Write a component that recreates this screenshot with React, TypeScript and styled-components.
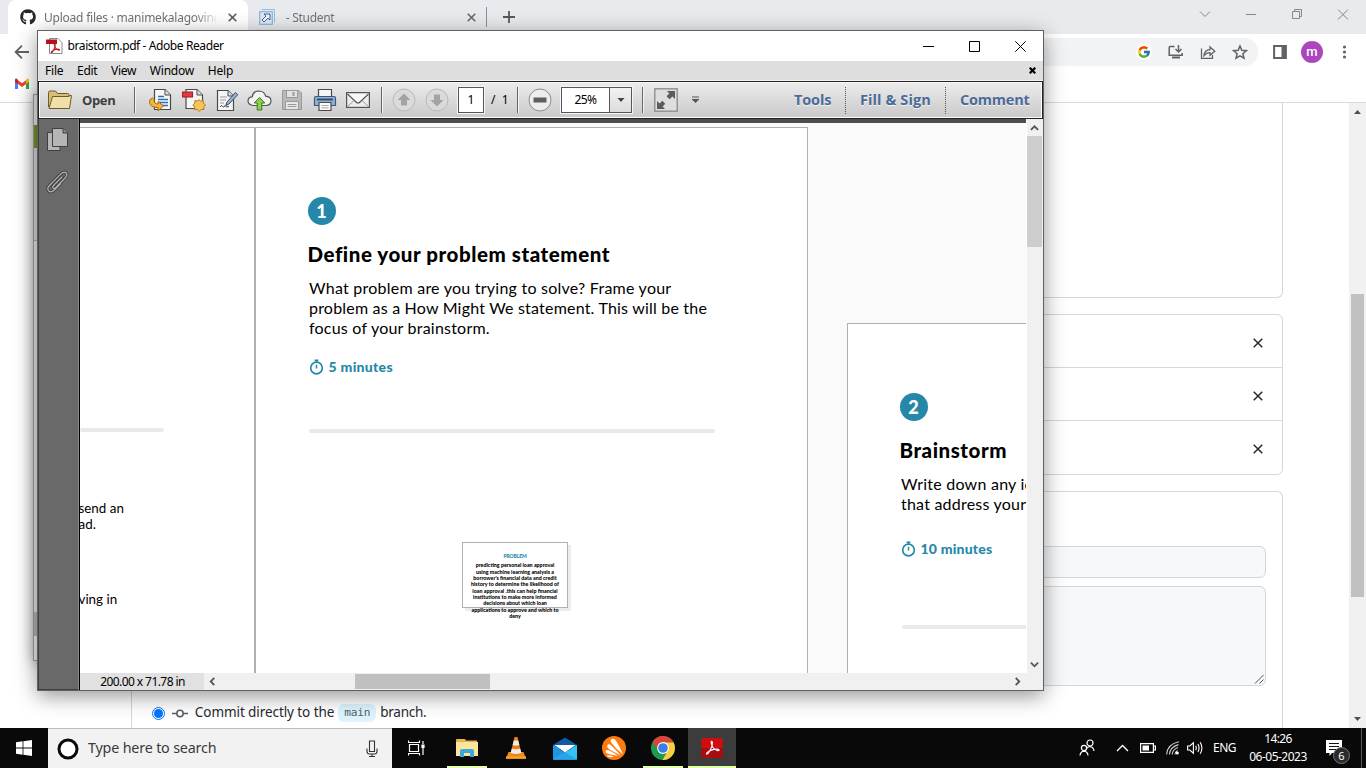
import React from 'react';
import styled, { createGlobalStyle } from 'styled-components';
import { FcGoogle } from 'react-icons/fc';
import { FaGithub } from 'react-icons/fa';

const Global = createGlobalStyle`
  * { box-sizing: border-box; }
  html, body { margin: 0; padding: 0; overflow: hidden; }
  body { font-family: "Open Sans", "Noto Sans", sans-serif; }
  svg { display: block; flex: none; }
`;

const UI = '"Noto Sans", "Open Sans", sans-serif';
const DOC = 'Lato, "Open Sans", sans-serif';

/* ---------- desktop ---------- */

const Desktop = styled.div`
  position: relative;
  width: 1366px;
  height: 768px;
  overflow: hidden;
  display: flex;
  flex-direction: column;
  background: #fff;
`;

const Label = styled.span<{ $size: number; $ls?: number; $color?: string; $weight?: number; $font?: string }>`
  font-family: ${(p) => p.$font || UI};
  font-size: ${(p) => p.$size}px;
  letter-spacing: ${(p) => p.$ls || 0}px;
  color: ${(p) => p.$color || '#000'};
  font-weight: ${(p) => p.$weight || 400};
  white-space: nowrap;
  line-height: 1;
`;

/* ---------- browser ---------- */

const Browser = styled.div`
  height: 728px;
  display: flex;
  flex-direction: column;
`;

const TabStrip = styled.div`
  height: 34px;
  background: #e8eaed;
  display: flex;
  align-items: stretch;
  padding-left: 8px;
`;

const Tab = styled.div<{ $active?: boolean; $w: number }>`
  width: ${(p) => p.$w}px;
  background: ${(p) => (p.$active ? '#fff' : 'transparent')};
  border-radius: 8px 8px 0 0;
  display: flex;
  align-items: center;
  padding: 0 ${(p) => (p.$active ? 11 : 10)}px 0 ${(p) => (p.$active ? 12 : 11)}px;
  gap: 8px;
`;

const TabTitle = styled.span<{ $ls: number }>`
  flex: 1;
  min-width: 0;
  overflow: hidden;
  white-space: nowrap;
  font-family: ${UI};
  font-size: 12px;
  letter-spacing: ${(p) => p.$ls}px;
  color: #6f7378;
  -webkit-mask-image: linear-gradient(90deg, #000 86%, transparent 99%);
  mask-image: linear-gradient(90deg, #000 86%, transparent 99%);
`;

const TabDivider = styled.div`
  width: 1px;
  height: 20px;
  margin-top: 7px;
  background: #8c9096;
`;

const NewTab = styled.div`
  display: flex;
  align-items: center;
  margin-left: 16px;
`;

const Caption = styled.div`
  margin-left: auto;
  display: flex;
  padding: 6px 15px 0 0;
  gap: 30px;
  height: 24px;
`;

const Toolbar = styled.div`
  height: 36px;
  display: flex;
  align-items: center;
  padding: 0 14px 0 14px;
  background: #fff;
`;

const Omnibox = styled.div`
  flex: 1;
  margin-left: 40px;
  height: 28px;
  border-radius: 14px;
  background: #f1f3f4;
  display: flex;
  align-items: center;
  justify-content: flex-end;
  gap: 16px;
  padding-right: 10px;
`;

const GoogleDot = styled.span`
  width: 16px;
  height: 16px;
  border-radius: 50%;
  background: #fff;
  display: flex;
  align-items: center;
  justify-content: center;
`;

const ToolbarEnd = styled.div`
  display: flex;
  align-items: center;
  margin-left: 14px;
`;

const Avatar = styled.div`
  width: 22px;
  height: 22px;
  border-radius: 50%;
  background: #ab47bc;
  color: #fff;
  margin: 0 13px;
  font: 500 13px/21px Roboto, sans-serif;
  text-align: center;
`;

const Bookmarks = styled.div`
  height: 33px;
  border-bottom: 1px solid #d8dadd;
  padding: 8px 0 0 14px;
`;

const Page = styled.div`
  flex: 1;
  min-height: 0;
  overflow: hidden;
  display: flex;
`;

const Main = styled.div`
  width: 1152px;
  margin-left: 131px;
  display: flex;
  flex-direction: column;
  gap: 16px;
`;

const Box = styled.div<{ $h: number; $edge?: 'top' | 'bottom' }>`
  flex: none;
  height: ${(p) => p.$h}px;
  border: 1px solid #d0d7de;
  ${(p) => p.$edge === 'top' && 'border-top: 0;'}
  ${(p) => p.$edge === 'bottom' && 'border-bottom: 0;'}
  border-radius: ${(p) => (p.$edge === 'top' ? '0 0 6px 6px' : p.$edge === 'bottom' ? '6px 6px 0 0' : '6px')};
`;

const FileRow = styled.div`
  height: 53px;
  border-bottom: 1px solid #d0d7de;
  display: flex;
  align-items: center;
  justify-content: flex-end;
  padding: 4px 19px 0 0;
  &:last-child {
    border-bottom: 0;
    padding-top: 3px;
  }
`;

const CommitBox = styled(Box)`
  padding: 54px 16px 0;
`;

const Field = styled.div<{ $h: number }>`
  height: ${(p) => p.$h}px;
  border: 1px solid #d0d7de;
  border-radius: 6px;
  background: #f6f8fa;
  margin-bottom: 8px;
  display: flex;
  align-items: flex-end;
  justify-content: flex-end;
`;

const RadioRow = styled.div`
  display: flex;
  align-items: center;
  height: 20px;
  margin-top: 17px;
  padding-left: 4px;
`;

const Radio = styled.span`
  width: 13px;
  height: 13px;
  border-radius: 50%;
  border: 1px solid #0075ff;
  display: flex;
  align-items: center;
  justify-content: center;
  margin-right: 7px;
  &::after {
    content: '';
    width: 9px;
    height: 9px;
    border-radius: 50%;
    background: #0075ff;
  }
`;

const Branch = styled.span`
  background: #ddf4ff;
  color: #57606a;
  border-radius: 6px;
  height: 18px;
  width: 38px;
  text-align: center;
  font: 11.2px/18px "DejaVu Sans Mono", monospace;
  letter-spacing: -0.2px;
  margin: 0 4px 0 4px;
`;

const PageScroll = styled.div`
  width: 17px;
  margin-left: auto;
  background: #f1f1f1;
  display: flex;
  flex-direction: column;
  align-items: center;
  padding: 7px 0 7px;
`;

const PageThumb = styled.div`
  width: 13px;
  height: 303px;
  margin-top: 180px;
  margin-bottom: auto;
  background: #c1c1c1;
`;

/* ---------- window behind the reader ---------- */

const BackWindow = styled.div`
  position: absolute;
  left: 33px;
  top: 94px;
  width: 500px;
  height: 567px;
  border: 1px solid #9b9b9b;
  background: #ececec;
  box-shadow: 0 2px 14px rgba(0, 0, 0, 0.38);
  display: flex;
  flex-direction: column;
`;

const Strip = styled.div<{ $h: number; $bg: string }>`
  height: ${(p) => p.$h}px;
  background: ${(p) => p.$bg};
`;

/* ---------- reader window ---------- */

const Reader = styled.div`
  position: absolute;
  left: 37px;
  top: 30px;
  width: 1007px;
  height: 661px;
  border: 1px solid #606060;
  background: #fff;
  box-shadow: 0 5px 20px rgba(0, 0, 0, 0.42);
  display: flex;
  flex-direction: column;
`;

const TitleBar = styled.div`
  height: 30px;
  display: flex;
  align-items: center;
  padding: 0 17px 0 8px;
  gap: 4.5px;
`;

const TitleButtons = styled.div`
  margin-left: auto;
  display: flex;
  gap: 35px;
`;

const MenuBar = styled.div`
  height: 20px;
  background: #dedede;
  border-bottom: 1px solid #f4f4f4;
  display: flex;
  align-items: center;
  padding: 0 7px 0 7px;
  gap: 13.7px;
`;

const MenuClose = styled.span`
  margin-left: auto;
`;

const Tools = styled.div`
  height: 38px;
  border: 1px solid #222;
  box-shadow: inset 0 0 0 1px #fbfbfb;
  background: linear-gradient(#ececec, #c9c9c9);
  display: flex;
  align-items: center;
`;

const Slot = styled.div<{ $ml: number; $w: number }>`
  flex: none;
  margin-left: ${(p) => p.$ml}px;
  width: ${(p) => p.$w}px;
  display: flex;
  align-items: center;
`;

const Sep = styled.div<{ $ml: number }>`
  flex: none;
  margin-left: ${(p) => p.$ml}px;
  width: 2px;
  height: 26px;
  background: #666;
  border-right: 1px solid #f4f4f4;
`;

const PageBox = styled.div`
  flex: none;
  margin-left: 9px;
  width: 26px;
  height: 26px;
  border: 1px solid #555;
  outline: 1px solid #f6f6f6;
  background: #fff;
  display: flex;
  align-items: center;
  justify-content: center;
`;

const Zoom = styled.div`
  flex: none;
  margin-left: 9px;
  width: 71px;
  height: 26px;
  border: 1px solid #555;
  outline: 1px solid #f6f6f6;
  background: #fff;
  display: flex;
  align-items: stretch;
`;

const ZoomValue = styled.div`
  width: 47px;
  display: flex;
  align-items: center;
  justify-content: center;
`;

const ZoomArrow = styled.div`
  flex: 1;
  border-left: 1px solid #555;
  background: linear-gradient(#f2f2f2, #dcdcdc);
  display: flex;
  align-items: center;
  justify-content: center;
`;

const Panes = styled.div`
  margin-left: auto;
  display: flex;
  align-items: center;
  padding-right: 13px;
`;

const PaneLink = styled.span<{ $ls: number; $w: number }>`
  width: ${(p) => p.$w}px;
  font: 700 14.5px/26px "Open Sans", sans-serif;
  letter-spacing: ${(p) => p.$ls}px;
  color: #4b6b98;
  text-shadow: 0 1px 0 #f4f4f4;
  white-space: nowrap;
`;

const Dots = styled.span`
  height: 27px;
  border-left: 1px dotted #555;
  margin: 0 14px;
`;

const Work = styled.div`
  flex: 1;
  min-height: 0;
  display: flex;
`;

const Rail = styled.div`
  width: 42px;
  background: #696969;
  border-left: 1px solid #404040;
  border-right: 1px solid #000;
  box-shadow: inset -1px 0 0 #8a8a8a, inset 0 -1px 0 #404040;
  padding: 9px 0 0 6px;
  display: flex;
  flex-direction: column;
  gap: 18px;
`;

const Center = styled.div`
  flex: 1;
  min-width: 0;
  display: flex;
  flex-direction: column;
`;

const Upper = styled.div`
  flex: 1;
  min-height: 0;
  display: flex;
`;

const Canvas = styled.div`
  flex: 1;
  min-width: 0;
  border-top: 4px solid #4e4e4e;
  background: #fafafa;
  overflow: hidden;
  display: flex;
  align-items: stretch;
  padding-top: 4px;
`;

const Sheet = styled.div<{ $w: number; $mt?: number; $ml?: number; $edges: string; $pad: string }>`
  flex: none;
  width: ${(p) => p.$w}px;
  margin-top: ${(p) => p.$mt || 0}px;
  margin-left: ${(p) => p.$ml || 0}px;
  background: #fff;
  border: solid #b0b0b0;
  border-width: ${(p) => p.$edges};
  padding: ${(p) => p.$pad};
  overflow: hidden;
`;

const Badge = styled.div`
  width: 28px;
  height: 28px;
  margin-left: -0.5px;
  border-radius: 50%;
  background: #2588a8;
  color: #fff;
  font: 900 18px/28px ${DOC};
  text-align: center;
`;

const Heading = styled.h2<{ $ls: number }>`
  margin: 15px 0 0 -0.5px;
  font: 900 20.5px/28px ${DOC};
  letter-spacing: ${(p) => p.$ls}px;
  color: #000;
  white-space: nowrap;
`;

const Para = styled.p`
  margin: 10px 0 0 1px;
  font: 400 16px/20px ${DOC};
  color: #000;
  white-space: nowrap;
`;

const Line = styled.span<{ $ls: number }>`
  display: block;
  letter-spacing: ${(p) => p.$ls}px;
`;

const Duration = styled.div<{ $mt: number }>`
  margin: ${(p) => p.$mt}px 0 0 1px;
  height: 20px;
  display: flex;
  align-items: center;
  gap: 4.5px;
`;

const Rule = styled.div<{ $w: number; $m: string }>`
  width: ${(p) => p.$w}px;
  height: 4px;
  margin: ${(p) => p.$m};
  border-radius: 2px;
  background: #e9e9e9;
`;

const Note = styled.div`
  width: 106px;
  height: 66px;
  margin: 109px 0 0 154px;
  border: 1px solid #b0b0b0;
  background: #fff;
  box-shadow: 3px 3px 0 #ececec;
  padding-top: 9.5px;
  text-align: center;
  font: 900 5.3px/6.35px ${DOC};
  white-space: nowrap;
  display: flex;
  flex-direction: column;
  align-items: center;
`;

const NoteTitle = styled.span`
  color: #2588a8;
  font-size: 5px;
  letter-spacing: -0.1px;
  margin-bottom: 3.5px;
`;

const LeftText = styled.p<{ $mt: number }>`
  margin: ${(p) => p.$mt}px 0 0 -1.5px;
  font: 400 13.4px/16px ${DOC};
  white-space: nowrap;
`;

const VScroll = styled.div`
  width: 17px;
  background: #f0f0f0;
  border-left: 1px solid #fff;
  display: flex;
  flex-direction: column;
  align-items: center;
  padding: 5px 1px 4px 0;
`;

const VThumb = styled.div`
  width: 15px;
  height: 111px;
  margin: 3px 0 auto;
  background: #cdcdcd;
`;

const Bottom = styled.div`
  height: 17px;
  background: #f0f0f0;
  display: flex;
  align-items: center;
`;

const Size = styled.div`
  width: 124px;
  height: 17px;
  background: #e1e1e1;
  display: flex;
  align-items: center;
  justify-content: center;
  padding-left: 1px;
`;

const HThumb = styled.div`
  width: 135px;
  height: 15px;
  margin-left: 138px;
  background: #c0c0c0;
`;

/* ---------- taskbar ---------- */

const Taskbar = styled.div`
  height: 40px;
  background: #090909;
  display: flex;
  align-items: stretch;
  position: relative;
`;

const Start = styled.div`
  width: 48px;
  display: flex;
  align-items: center;
  justify-content: center;
`;

const Search = styled.div`
  width: 344px;
  background: #f2f2f2;
  border-top: 1px solid #bdbdbd;
  display: flex;
  align-items: center;
  padding: 0 13px 0 9px;
  gap: 9px;
`;

const Mic = styled.span`
  margin-left: auto;
`;

const TaskButton = styled.div<{ $w?: number; $active?: boolean; $line?: boolean }>`
  width: ${(p) => p.$w || 49}px;
  margin-left: ${(p) => (p.$active ? 1 : 0)}px;
  display: flex;
  align-items: center;
  justify-content: center;
  position: relative;
  background: ${(p) => (p.$active ? '#3c3c3c' : 'transparent')};
  &::after {
    content: '';
    display: ${(p) => (p.$line ? 'block' : 'none')};
    position: absolute;
    bottom: 0;
    left: ${(p) => (p.$active ? 0 : 5)}px;
    right: ${(p) => (p.$active ? 0 : 4)}px;
    height: 2px;
    background: #dfffa8;
  }
`;

const Tray = styled.div`
  margin-left: auto;
  display: flex;
  align-items: center;
`;

const Clock = styled.div`
  width: 60px;
  margin: 0 0 0 11px;
  display: flex;
  flex-direction: column;
  align-items: center;
  gap: 6px;
`;

const Notice = styled.div`
  position: relative;
  margin: 0 8px 0 18px;
  width: 27px;
  height: 40px;
  padding-top: 12px;
`;

const Count = styled.span`
  position: absolute;
  left: 7px;
  top: 19px;
  width: 17px;
  height: 17px;
  border-radius: 50%;
  border: 1px solid #777;
  background: #2b2b2b;
  color: #fff;
  font: 11px/15px ${UI};
  text-align: center;
`;

const TrayEdge = styled.div`
  width: 5px;
  height: 40px;
  border-left: 1px solid #5a5a5a;
`;

/* ---------- drawings ---------- */

const Cross = ({ s, w, c }: { s: number; w: number; c: string }) => (
  <svg width={s} height={s} viewBox={`0 0 ${s} ${s}`}>
    <path d={`M.7 .7L${s - 0.7} ${s - 0.7}M${s - 0.7} .7L.7 ${s - 0.7}`} stroke={c} strokeWidth={w} />
  </svg>
);

const Chevron = ({ d, w, c = '#555', sw = 2 }: { d: 'up' | 'down' | 'left' | 'right'; w: number; c?: string; sw?: number }) => {
  const paths = { up: 'M1 6.5L5 2.5L9 6.5', down: 'M1 3L5 7L9 3', left: 'M7 1L3 5L7 9', right: 'M3 1L7 5L3 9' };
  return (
    <svg width={w} height={w} viewBox="0 0 10 10" fill="none">
      <path d={paths[d]} stroke={c} strokeWidth={sw} />
    </svg>
  );
};

const Tri = ({ up, c = '#505050', w = 7 }: { up?: boolean; c?: string; w?: number }) => (
  <svg width={w} height="4" viewBox="0 0 7 4">
    <path d={up ? 'M0 4L3.5 0L7 4Z' : 'M0 0L3.5 4L7 0Z'} fill={c} />
  </svg>
);

const Swoosh = ({ c, sw }: { c: string; sw: number }) => (
  <path
    d="M2.2 13.2C1.2 14.6 2.6 15.2 4 13C5.8 10.2 8 6 7.8 3C7.7 .8 6.2 1.2 6.6 3.2C7.2 6.4 9.6 9.6 12.4 10.6C15 11.4 15.4 9.4 12.6 9.3C9.2 9.2 5 10.6 2.2 13.2Z"
    fill="none"
    stroke={c}
    strokeWidth={sw}
  />
);

const Stopwatch = () => (
  <svg width="15" height="16" viewBox="0 0 15 16" fill="none" stroke="#2588a8">
    <circle cx="7.5" cy="9" r="5.8" strokeWidth="1.7" />
    <path d="M7.5 5.8V9.6M5.6 1.2H9.4M7.5 1.2V3.2" strokeWidth="1.5" />
  </svg>
);

const RoundButton = ({ d, strong }: { d: string; strong?: boolean }) => (
  <svg width="24" height="24" viewBox="0 0 24 24">
    <circle cx="12" cy="12" r="11" fill={strong ? '#ededed' : '#dadada'} stroke={strong ? '#8c8c8c' : '#b9b9b9'} />
    <path d={d} fill={strong ? '#5f5f5f' : '#a3a3a3'} />
  </svg>
);

const noteLines = [
  'predicting personal loan approval',
  'using machine learning analysis a',
  "borrower's financial data and credit",
  'history to determine the likelihood of',
  'loan approval .this can help financial',
  'institutions to make more informed',
  'decisions about which loan',
  'applications to approve and which to',
  'deny',
];

/* ---------- sections ---------- */

const BrowserWindow = () => (
  <Browser>
    <TabStrip>
      <Tab $active $w={240}>
        <FaGithub size={16} color="#24292f" />
        <TabTitle $ls={-0.23}>Upload files · manimekalagovinda</TabTitle>
        <Cross s={9} w={1.6} c="#55595e" />
      </Tab>
      <Tab $w={238}>
        <svg width="16" height="16" viewBox="0 0 16 16" fill="none">
          <path d="M2.5 .5H15.5V13.5" stroke="#7cc6e8" strokeWidth="1" />
          <rect x=".7" y="2.7" width="12.6" height="12.6" stroke="#8fb0d8" strokeWidth="1.2" fill="#dfe9f6" />
          <path d="M5 5H11V11L9 9.2L5 13L3 11L7 7.1Z" stroke="#3f5f9a" strokeWidth="1" fill="#f4f8fd" />
        </svg>
        <TabTitle $ls={-0.3}>&nbsp;- Student</TabTitle>
        <Cross s={9} w={1.6} c="#66696e" />
      </Tab>
      <TabDivider />
      <NewTab>
        <svg width="12" height="12" viewBox="0 0 12 12">
          <path d="M6 0V12M0 6H12" stroke="#55595e" strokeWidth="1.8" />
        </svg>
      </NewTab>
      <Caption>
        <svg width="16" height="16" viewBox="0 0 16 16" fill="none" stroke="#84878b">
          <path d="M3 5.5L8 10.5L13 5.5" />
        </svg>
        <svg width="16" height="16" viewBox="0 0 16 16" fill="none" stroke="#84878b">
          <path d="M3 8.5H13" />
        </svg>
        <svg width="16" height="16" viewBox="0 0 16 16" fill="none" stroke="#84878b">
          <path d="M3.5 5.5H10.5V12.5H3.5ZM5.5 5.5V3.5H12.5V10.5H10.5" />
        </svg>
        <svg width="16" height="16" viewBox="0 0 16 16" fill="none" stroke="#84878b">
          <path d="M3 3.5L13 13.5M13 3.5L3 13.5" />
        </svg>
      </Caption>
    </TabStrip>
    <Toolbar>
      <svg width="16" height="16" viewBox="0 0 16 16" fill="none" stroke="#5f6368" strokeWidth="1.8">
        <path d="M15 8H2M8 1.6L1.6 8L8 14.4" />
      </svg>
      <Omnibox>
        <GoogleDot>
          <FcGoogle size={14} />
        </GoogleDot>
        <svg width="16" height="16" viewBox="0 0 16 16" fill="none" stroke="#5f6368" strokeWidth="1.5">
          <path d="M6.5 2.5H2.2Q1.2 2.5 1.2 3.5V11.2H14.2V9M10.5 1V8M7.5 5L10.5 8L13.5 5" />
          <path d="M4 12.5H12V14.5H4Z" fill="#5f6368" stroke="none" />
        </svg>
        <svg width="16" height="16" viewBox="0 0 16 16" fill="none" stroke="#5f6368" strokeWidth="1.3">
          <path d="M1.5 4.5V14.3H12.5V11M4 11.5Q4.5 6 10 5.7V3L14.8 7.2L10 11.3V8.7Q6.5 8.5 4 11.5Z" />
        </svg>
        <svg width="16" height="16" viewBox="0 0 16 16" fill="none" stroke="#5f6368" strokeWidth="1.5">
          <path d="M8 2L9.8 6.3L14.4 6.7L10.9 9.7L12 14.2L8 11.8L4 14.2L5.1 9.7L1.6 6.7L6.2 6.3Z" />
        </svg>
      </Omnibox>
      <ToolbarEnd>
        <svg width="16" height="16" viewBox="0 0 16 16">
          <path d="M2.1 2.1H13.9V13.9H2.1Z" fill="none" stroke="#5f6368" strokeWidth="2" />
          <path d="M9.5 2H14V14H9.5Z" fill="#5f6368" />
        </svg>
        <Avatar>m</Avatar>
        <svg width="16" height="16" viewBox="0 0 16 16" fill="#5f6368">
          <circle cx="8.5" cy="3" r="1.6" />
          <circle cx="8.5" cy="8" r="1.6" />
          <circle cx="8.5" cy="13" r="1.6" />
        </svg>
      </ToolbarEnd>
    </Toolbar>
    <Bookmarks>
      <svg width="16" height="12" viewBox="0 0 16 12">
        <path d="M1 2V11H4V4Z" fill="#4285f4" />
        <path d="M15 2V11H12V4Z" fill="#34a853" />
        <path d="M4 2.2L8 5.2L12 2.2V6L8 9L4 6Z" fill="#ea4335" />
        <path d="M1 2Q1 .4 2.6 .6L4 2V6L1 3.8Z" fill="#c5221f" />
        <path d="M15 2Q15 .4 13.4 .6L12 2V6L15 3.8Z" fill="#fbbc04" />
      </svg>
    </Bookmarks>
    <Page>
      <Main>
        <Box $h={195} $edge="top" />
        <Box $h={161}>
          {[0, 1, 2].map((i) => (
            <FileRow key={i}>
              <Cross s={10} w={1.5} c="#24292f" />
            </FileRow>
          ))}
        </Box>
        <CommitBox $h={240} $edge="bottom">
          <Field $h={32} />
          <Field $h={100}>
            <svg width="11" height="11" viewBox="0 0 11 11">
              <path d="M1 9.5L9.5 1M5.5 9.5L9.5 5.5" stroke="#555" />
            </svg>
          </Field>
          <RadioRow>
            <Radio />
            <svg width="16" height="16" viewBox="0 0 16 16" fill="none" stroke="#57606a" strokeWidth="1.5">
              <circle cx="8" cy="8.5" r="3.2" />
              <path d="M0 8.5H4.8M11.2 8.5H16" />
            </svg>
            <Label $size={13.5} $ls={-0.08} $color="#24292f">
              &nbsp;&nbsp;Commit directly to the
            </Label>
            <Branch>main</Branch>
            <Label $size={13.5} $ls={-0.25} $color="#24292f">branch.</Label>
          </RadioRow>
        </CommitBox>
      </Main>
      <PageScroll>
        <Tri up c="#505050" />
        <PageThumb />
        <Tri c="#505050" />
      </PageScroll>
    </Page>
  </Browser>
);

const ReaderToolbar = () => (
  <Tools>
    <Slot $ml={8} $w={26}>
      <svg width="26" height="22" viewBox="0 0 26 22" stroke="#6b5a2b" strokeLinejoin="round">
        <path d="M1.5 18V3.5Q1.5 2 3 2H8.5L10.5 4.5H20.5Q22 4.5 22 6V9" fill="#d9bd72" />
        <path d="M22.3 6.5H24.5L22.5 19.5H2L5.5 7.5H22.3" fill="#f1e0a5" />
      </svg>
    </Slot>
    <Slot $ml={9} $w={52}>
      <Label $size={13} $weight={700} $color="#404040" $font='"Open Sans", sans-serif' $ls={-0.35}>Open</Label>
    </Slot>
    <Sep $ml={0} />
    <Slot $ml={12} $w={24}>
      <svg width="24" height="24" viewBox="0 0 24 24">
        <path d="M6.5 1.5H17L22.5 7V21.5H6.5Z" fill="#f6f6f6" stroke="#4a4a4a" strokeWidth="1.2" />
        <path d="M17 1.5V7H22.5" fill="#ddd" stroke="#4a4a4a" />
        <path d="M10 8.5H16M10 11.5H20M10 14.5H20M12 17.5H20" stroke="#2d6fb5" strokeWidth="1.4" />
        <path d="M4.5 10Q1 11 1.5 14.5Q2.5 19.5 10 19.5V23L15.5 18L10 13.5V16Q5.5 16 6.2 11.5Z" fill="#f3b73b" stroke="#a06a12" />
      </svg>
    </Slot>
    <Slot $ml={10} $w={24}>
      <svg width="24" height="24" viewBox="0 0 24 24">
        <path d="M4 1.5H15L20.5 7V20.5H4Z" fill="#f6f6f6" stroke="#4a4a4a" strokeWidth="1.2" />
        <path d="M15 1.5V7H20.5" fill="#ddd" stroke="#4a4a4a" />
        <rect x=".6" y="4" width="10" height="5" fill="#e33b41" stroke="#9c1a20" />
        <path d="M17 11.5L18.5 13.2L21.2 12.6L21.4 15.3L23.5 16.8L21.8 18.8L22 21.5L19.2 21.5L17.3 23.4L15.4 21.5L12.6 21.7L12.7 19L10.8 17L12.8 15.2L12.9 12.6L15.6 13Z" fill="#f5c55a" stroke="#b5791c" />
      </svg>
    </Slot>
    <Slot $ml={10} $w={24}>
      <svg width="24" height="24" viewBox="0 0 24 24">
        <path d="M1.5 2.5H12L17.5 8V22.5H1.5Z" fill="#f6f6f6" stroke="#4a4a4a" strokeWidth="1.2" />
        <path d="M12 2.5V8H17.5" fill="#ddd" stroke="#4a4a4a" />
        <path d="M4 9H11M4 12H10M4 15H8" stroke="#999" />
        <path d="M4 19Q6 16 6.5 18.5Q8 20 9 17.5Q10 20 13 18.5" stroke="#444" fill="none" />
        <path d="M19.5 4.5L21.7 6.8L13 16L9.8 17.5L11 14Z" fill="#9cb4cf" stroke="#374a63" />
      </svg>
    </Slot>
    <Slot $ml={7} $w={26}>
      <svg width="26" height="24" viewBox="0 0 26 24">
        <path d="M6.5 17.5Q1 17 1 12.8Q1.2 9 5.2 8.8Q6 3 12 3Q17.5 3.2 18.6 8.2Q24 8.6 24 13Q23.8 17.2 19 17.5Z" fill="#f3f3f3" stroke="#555" strokeWidth="1.2" />
        <path d="M12.5 9.5L17.8 15H14.8V22H10.2V15H7.2Z" fill="#8bd04c" stroke="#3f7a1b" />
      </svg>
    </Slot>
    <Slot $ml={7} $w={24}>
      <svg width="24" height="24" viewBox="0 0 24 24" stroke="#9a9a9a">
        <path d="M2.5 2.5H19L21.5 5V21.5H2.5Z" fill="#b9b9b9" />
        <path d="M6.5 2.5H17.5V9.5H6.5Z" fill="#e3e3e3" />
        <path d="M13.5 4V8" strokeWidth="2" />
        <path d="M5.5 13.5H18.5V21.5H5.5Z" fill="#e9e9e9" />
        <path d="M7.5 16.5H16.5M7.5 18.5H16.5" />
      </svg>
    </Slot>
    <Slot $ml={9} $w={24}>
      <svg width="24" height="24" viewBox="0 0 24 24">
        <path d="M5.5 9V1.5H18.5V9" fill="#f6f6f6" stroke="#4a4a4a" strokeWidth="1.2" />
        <path d="M1.5 10Q1.5 8.5 3 8.5H21Q22.5 8.5 22.5 10V17.5H1.5Z" fill="#8fb3dc" stroke="#3d5878" strokeWidth="1.2" />
        <path d="M4 11.5H20" stroke="#3d4a5a" strokeWidth="2" />
        <path d="M6 14.5H18V22.5H6Z" fill="#fafafa" stroke="#4a4a4a" strokeWidth="1.2" />
        <path d="M8.5 17.5H15.5M8.5 19.8H15.5" stroke="#aaa" />
      </svg>
    </Slot>
    <Slot $ml={8} $w={26}>
      <svg width="26" height="24" viewBox="0 0 26 24" stroke="#555" fill="none">
        <rect x="1.6" y="4.6" width="22.8" height="14.8" fill="#ededed" strokeWidth="1.2" />
        <path d="M2.5 6L11 14Q13 16 15 14L23.5 6" fill="#f8f8f8" strokeWidth="1.1" />
        <path d="M2.5 18.5L9 12.5M23.5 18.5L17 12.5" stroke="#999" />
      </svg>
    </Slot>
    <Sep $ml={10} />
    <Slot $ml={9} $w={24}>
      <RoundButton d="M12 5.5L18.5 12H15V17.5H9V12H5.5Z" />
    </Slot>
    <Slot $ml={9} $w={24}>
      <RoundButton d="M12 18.5L18.5 12H15V6.5H9V12H5.5Z" />
    </Slot>
    <PageBox>
      <Label $size={12}>1</Label>
    </PageBox>
    <Slot $ml={7} $w={18}>
      <Label $size={12}>/&nbsp; 1</Label>
    </Slot>
    <Sep $ml={8} />
    <Slot $ml={9} $w={24}>
      <RoundButton strong d="M5.5 9.5H18.5V14.5H5.5Z" />
    </Slot>
    <Zoom>
      <ZoomValue>
        <Label $size={12} $ls={-0.5}>25%</Label>
      </ZoomValue>
      <ZoomArrow>
        <Tri c="#444" w={8} />
      </ZoomArrow>
    </Zoom>
    <Sep $ml={10} />
    <Slot $ml={10} $w={24}>
      <svg width="24" height="24" viewBox="0 0 24 24">
        <rect x=".8" y=".8" width="22.4" height="22.4" fill="#dedede" stroke="#8f8f8f" strokeWidth="1.4" />
        <path d="M13 3H21V11L18.5 8.6L15.5 11.2L12.5 8.3L15.3 5.6ZM3 21V13L5.6 15.6L8.3 12.8L11.2 15.7L8.6 18.4L11 21Z" fill="#5c5c5c" />
      </svg>
    </Slot>
    <Slot $ml={13} $w={9}>
      <svg width="9" height="8" viewBox="0 0 9 8" fill="#555">
        <path d="M1 .5H8V1.5H1ZM1 3H8V4H7.5L4.5 7L1.5 4H1Z" />
      </svg>
    </Slot>
    <Panes>
      <PaneLink $w={37} $ls={-0.15}>Tools</PaneLink>
      <Dots />
      <PaneLink $w={71} $ls={0.1}>Fill &amp; Sign</PaneLink>
      <Dots />
      <PaneLink $w={69} $ls={-0.22}>Comment</PaneLink>
    </Panes>
  </Tools>
);

const ReaderWindow = () => (
  <Reader>
    <TitleBar>
      <svg width="17" height="17" viewBox="0 0 17 17">
        <path d="M3.5 .5H12L16 4.5V15.5H3.5Z" fill="#fff" stroke="#8a8a8a" />
        <rect x="0" y="1.5" width="11" height="4.5" fill="#b1121b" />
        <g transform="translate(4 5) scale(.66)">
          <Swoosh c="#c01822" sw={1.7} />
        </g>
      </svg>
      <Label $size={12} $ls={-0.4}>braistorm.pdf - Adobe Reader</Label>
      <TitleButtons>
        <svg width="11" height="11" viewBox="0 0 11 11"><path d="M0 5.5H11" stroke="#000" /></svg>
        <svg width="11" height="11" viewBox="0 0 11 11"><path d="M.5 .5H10.5V10.5H.5Z" stroke="#000" fill="none" /></svg>
        <svg width="11" height="11" viewBox="0 0 11 11"><path d="M.3 .3L10.7 10.7M10.7 .3L.3 10.7" stroke="#000" /></svg>
      </TitleButtons>
    </TitleBar>
    <MenuBar>
      <Label $size={12} $ls={-0.2}>File</Label>
      <Label $size={12} $ls={-0.3}>Edit</Label>
      <Label $size={12} $ls={-0.3}>View</Label>
      <Label $size={12} $ls={-0.2}>Window</Label>
      <Label $size={12} $ls={-0.2}>Help</Label>
      <MenuClose>
        <Cross s={7} w={2.2} c="#000" />
      </MenuClose>
    </MenuBar>
    <ReaderToolbar />
    <Work>
      <Rail>
        <svg width="24" height="24" viewBox="0 0 24 24" fill="#b5b5b5" stroke="#3f3f3f">
          <path d="M2.5 4.5H15V22.5H2.5Z" />
          <path d="M7.5 .5H18L22.5 5V18.5H7.5Z" />
          <path d="M18 .5V5H22.5" fill="#8d8d8d" />
        </svg>
        <svg width="24" height="24" viewBox="0 0 24 24" fill="none" strokeLinecap="round">
          <path d="M17 8L8.5 16.5Q7 18 8.2 19Q9.5 20 11 18.5L20.5 8.5Q23 5.5 21 3.8Q18.8 2 16 4.8L4.5 16.5Q1.5 19.8 3.8 22Q6.3 24 9.3 21L15.5 14.8" stroke="#3f3f3f" strokeWidth="3" transform="translate(0 -1)" />
          <path d="M17 8L8.5 16.5Q7 18 8.2 19Q9.5 20 11 18.5L20.5 8.5Q23 5.5 21 3.8Q18.8 2 16 4.8L4.5 16.5Q1.5 19.8 3.8 22Q6.3 24 9.3 21L15.5 14.8" stroke="#b5b5b5" strokeWidth="1.2" transform="translate(0 -1)" />
        </svg>
      </Rail>
      <Center>
        <Upper>
          <Canvas>
            <Sheet $w={175} $edges="1px 1px 0 0" $pad="300px 0 0 0">
              <Rule $w={84} $m="0" />
              <LeftText $mt={68}>send an</LeftText>
              <LeftText $mt={0}>ad.</LeftText>
              <LeftText $mt={59}>ving in</LeftText>
            </Sheet>
            <Sheet $w={553} $edges="1px 1px 0 1px" $pad="69px 0 0 52px">
              <Badge>1</Badge>
              <Heading $ls={0.55}>Define your problem statement</Heading>
              <Para>
                <Line $ls={0.24}>What problem are you trying to solve? Frame your</Line>
                <Line $ls={0.2}>problem as a How Might We statement. This will be the</Line>
                <Line $ls={0.22}>focus of your brainstorm.</Line>
              </Para>
              <Duration $mt={19}>
                <Stopwatch />
                <Label $font={DOC} $size={14} $weight={900} $ls={0.3} $color="#2588a8">5 minutes</Label>
              </Duration>
              <Rule $w={406} $m="52px 0 0 1px" />
              <Note>
                <NoteTitle>PROBLEM</NoteTitle>
                {noteLines.map((t) => (
                  <span key={t}>{t}</span>
                ))}
              </Note>
            </Sheet>
            <Sheet $w={300} $mt={196} $ml={39} $edges="1px 0 0 1px" $pad="69px 0 0 52px">
              <Badge>2</Badge>
              <Heading $ls={0.55}>Brainstorm</Heading>
              <Para>
                <Line $ls={0.24}>Write down any ideas that come to mind</Line>
                <Line $ls={0.22}>that address your problem statement.</Line>
              </Para>
              <Duration $mt={25}>
                <Stopwatch />
                <Label $font={DOC} $size={14} $weight={900} $ls={0.2} $color="#2588a8">10 minutes</Label>
              </Duration>
              <Rule $w={300} $m="66px 0 0 1.5px" />
            </Sheet>
          </Canvas>
          <VScroll>
            <Chevron d="up" w={9} />
            <VThumb />
            <Chevron d="down" w={9} />
          </VScroll>
        </Upper>
        <Bottom>
          <Size>
            <Label $size={12} $ls={-0.57}>200.00 x 71.78 in</Label>
          </Size>
          <Slot $ml={4} $w={9}>
            <Chevron d="left" w={9} />
          </Slot>
          <HThumb />
          <Slot $ml={523} $w={9}>
            <Chevron d="right" w={9} />
          </Slot>
        </Bottom>
      </Center>
    </Work>
  </Reader>
);

const TaskbarView = () => (
  <Taskbar>
    <Start>
      <svg width="16" height="16" viewBox="0 0 16 16" fill="#fff">
        <path d="M0 2.2L6.6 1.3V7.6H0ZM7.4 1.2L16 0V7.6H7.4ZM0 8.4H6.6V14.7L0 13.8ZM7.4 8.4H16V16L7.4 14.8Z" />
      </svg>
    </Start>
    <Search>
      <svg width="22" height="22" viewBox="0 0 22 22">
        <circle cx="11" cy="11" r="9" fill="#fff" stroke="#0a0a0a" strokeWidth="3" />
      </svg>
      <Label $size={14.3} $ls={-0.17} $color="#3a3a3a">Type here to search</Label>
      <Mic>
        <svg width="14" height="18" viewBox="0 0 14 18" fill="none" stroke="#333" strokeWidth="1.1">
          <path d="M4.5 1H9.5V11.5H4.5ZM2 8.5V11.5Q2 14 4.5 14H9.5Q12 14 12 11.5V8.5M7 14V16.5M4 16.5H10" />
        </svg>
      </Mic>
    </Search>
    <TaskButton $w={50}>
      <svg width="18" height="16" viewBox="0 0 18 16" fill="none" stroke="#fff" strokeWidth="1.2">
        <path d="M1.5 4.5H10.5V11.5H1.5ZM.5 .5V2.5H11.5V.5M.5 15.5V13.5H11.5V15.5M15 1V4M15 8V15" />
        <path d="M14 5H16V7.5H14Z" fill="#fff" />
      </svg>
    </TaskButton>
    <TaskButton $line>
      <svg width="22" height="20" viewBox="0 0 22 20">
        <path d="M0 2Q0 1 1 1H9L10 2.5H21V18H0Z" fill="#e3b04a" />
        <path d="M0 4H22V18H0Z" fill="#ffe59a" />
        <path d="M1 1.5H8V3H1Z" fill="#f4bd3e" />
        <path d="M4 19V13Q4 11 6 11H16Q18 11 18 13V19H14V15H8V19Z" fill="#3ba7e0" />
      </svg>
    </TaskButton>
    <TaskButton>
      <svg width="22" height="24" viewBox="0 0 22 24">
        <path d="M3.5 16H18.5L21 22.5H1Z" fill="#f28a13" />
        <path d="M1 20.5H21V22.8H1Z" fill="#f5a623" />
        <path d="M9.5 1H12.5L16.5 18Q11 20.5 5.5 18Z" fill="#f07d0a" />
        <path d="M8.8 4.5H13.2L14.4 9Q11 10.3 7.6 9ZM6.8 12.5Q11 14 15.2 12.5L16.4 17Q11 19 5.6 17Z" fill="#ececec" />
      </svg>
    </TaskButton>
    <TaskButton>
      <svg width="24" height="23" viewBox="0 0 24 23">
        <path d="M0 8L12 .5L24 8V12H0Z" fill="#0f5ba8" />
        <path d="M1.5 8H22.5L12 15.5Z" fill="#fff" />
        <path d="M0 8L12 15.5L24 22.5H0Z" fill="#1f95e3" />
        <path d="M24 8L0 22.5H24Z" fill="#35c1f5" />
        <path d="M12 15.2L24 22.5H0Z" fill="#27a4ea" />
      </svg>
    </TaskButton>
    <TaskButton>
      <svg width="24" height="24" viewBox="0 0 24 24">
        <circle cx="12" cy="12" r="12" fill="#ff7a0a" />
        <path d="M9 3.5Q10.5 1.8 13 3.5Q16.5 8 21 18.5Q13.5 12.5 9.3 6.8Q8 4.8 9 3.5ZM5.5 9Q7 7.5 9 9.2Q13 13 19 19.5Q10.5 15.5 6 12.2Q4.5 10.5 5.5 9ZM3.6 14.8Q4.6 13.4 7 14.2Q11 16.2 16 19.8Q9 19 5 17.5Q3 16.5 3.6 14.8ZM5 19.3Q8 19.3 12 20.3Q9.5 21.8 7 21Q5 20.2 5 19.3Z" fill="#fff" />
      </svg>
    </TaskButton>
    <TaskButton $line>
      <svg width="24" height="24" viewBox="0 0 24 24">
        <circle cx="12" cy="12" r="12" fill="#1e9a52" />
        <path d="M1.6 6A12 12 0 0 1 22.6 6.5H12Q8 6.8 6.8 9.8L6 12.5Z" fill="#db4437" />
        <path d="M12 6.5H22.6A12 12 0 0 1 11.5 24L17 14.5Z" fill="#ffcd40" />
        <circle cx="12" cy="12" r="5.9" fill="#fff" />
        <circle cx="12" cy="12" r="4.8" fill="#3b7ded" />
      </svg>
    </TaskButton>
    <TaskButton $w={48} $line $active>
      <svg width="22" height="20" viewBox="0 0 22 20">
        <rect x=".5" y="0" width="21" height="20" fill="#d20d0f" />
        <rect x=".5" y="10" width="21" height="10" fill="#8f0a0a" opacity=".6" />
        <g transform="translate(3.6 1.8)">
          <Swoosh c="#fff" sw={1.1} />
        </g>
      </svg>
    </TaskButton>
    <Tray>
      <svg width="16" height="18" viewBox="0 0 16 18" fill="none" stroke="#fff" strokeWidth="1.2">
        <circle cx="11" cy="4" r="3" />
        <path d="M7.5 9.5Q9 7.5 11 7.5Q14.5 8 15 12" />
        <circle cx="5" cy="9" r="2.6" />
        <path d="M1 16.5Q1.5 12.5 5 12.2Q8.5 12.5 9 16.5" />
      </svg>
      <Slot $ml={21} $w={13}>
        <svg width="13" height="8" viewBox="0 0 13 8" fill="none" stroke="#fff" strokeWidth="1.4">
          <path d="M1 7L6.5 1.5L12 7" />
        </svg>
      </Slot>
      <Slot $ml={11} $w={16}>
        <svg width="16" height="10" viewBox="0 0 16 10">
          <path d="M.6 .6H13.4V9.4H.6ZM14 3H15.4V7H14" stroke="#fff" strokeWidth="1.2" fill="none" />
          <path d="M2.5 2.5H9V7.5H2.5Z" fill="#fff" />
        </svg>
      </Slot>
      <Slot $ml={10} $w={14}>
        <svg width="14" height="14" viewBox="0 0 14 14" fill="none" stroke="#fff" strokeWidth="1.1">
          <path d="M9 13.5Q9 11 11.5 9.5M6.2 13.5Q6.5 8.5 12 6.5M3.4 13.5Q4 6 12.5 3.6M.6 13.5Q1.5 3 13 .8" stroke="#ccc" />
          <circle cx="11.3" cy="12" r="1.6" fill="#fff" stroke="none" />
        </svg>
      </Slot>
      <Slot $ml={7} $w={17}>
        <svg width="17" height="14" viewBox="0 0 17 14" fill="none" stroke="#fff" strokeWidth="1.1">
          <path d="M.6 5H2.8L6.4 1.8V12.2L2.8 9H.6ZM8.6 4.8Q10 7 8.6 9.2M10.9 3Q13.2 7 10.9 11M13.2 1.2Q16.6 7 13.2 12.8" />
        </svg>
      </Slot>
      <Slot $ml={9} $w={24}>
        <Label $size={12} $ls={-0.5} $color="#fff">ENG</Label>
      </Slot>
      <Clock>
        <Label $size={12} $ls={-0.6} $color="#fff">14:26</Label>
        <Label $size={12} $ls={-0.5} $color="#fff">06-05-2023</Label>
      </Clock>
      <Notice>
        <svg width="17" height="17" viewBox="0 0 17 17">
          <path d="M0 0H16V13H6L3.5 16V13H0Z" fill="#fff" />
          <path d="M3 3.5H13M3 6.5H13M3 9.5H10" stroke="#111" strokeWidth="1.2" />
        </svg>
        <Count>6</Count>
      </Notice>
      <TrayEdge />
    </Tray>
  </Taskbar>
);

export default function App() {
  return (
    <Desktop>
      <Global />
      <BrowserWindow />
      <BackWindow>
        <Strip $h={30} $bg="#e6e6e6" />
        <Strip $h={23} $bg="#6d961f" />
        <Strip $h={92} $bg="#d3d5da" />
        <Strip $h={1} $bg="#aaaaaa" />
        <Strip $h={371} $bg="#e4e4e4" />
        <Strip $h={24} $bg="#b3b3b3" />
      </BackWindow>
      <ReaderWindow />
      <TaskbarView />
    </Desktop>
  );
}
